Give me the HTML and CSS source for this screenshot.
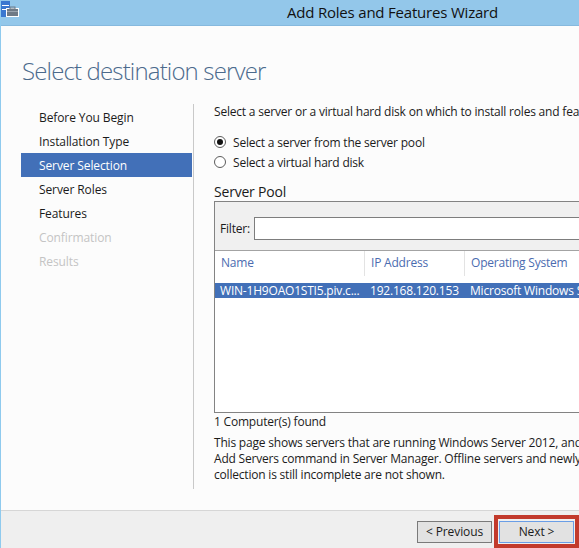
FILE: index.html
```html
<!DOCTYPE html>
<html lang="en">
<head>
<meta charset="utf-8">
<title>Add Roles and Features Wizard</title>
<link rel="stylesheet" href="styles.css">
</head>
<body>
<div class="window">
  <div class="titlebar">
    <span class="app-icon">
      <svg width="18" height="16" viewBox="0 0 18 16">
        <rect x="0" y="0" width="9" height="16" fill="#3a78d0"/>
        <rect x="1" y="4" width="7" height="1" fill="#ffffff"/>
        <rect x="1" y="8" width="7" height="1" fill="#ffffff"/>
        <rect x="5" y="7" width="13" height="9" fill="#ffffff"/>
        <rect x="9" y="6" width="5" height="2" fill="none" stroke="#6f7a86" stroke-width="1"/>
        <rect x="6" y="8" width="11" height="7" fill="#6f7a86"/>
        <rect x="6" y="10" width="11" height="1" fill="#9aa4ae"/>
      </svg>
    </span>
    <span class="title">Add Roles and Features Wizard</span>
    <span class="title-spacer"></span>
  </div>

  <div class="content">
    <div class="page-header">
      <h1 class="page-title">Select destination server</h1>
      <div class="dest">
        <div class="dest-label">DESTINATION SERVER</div>
        <div class="dest-value">WIN-1H9OAO1STI5.piv.com</div>
      </div>
    </div>

    <div class="main">
      <ul class="steps">
        <li class="step">Before You Begin</li>
        <li class="step">Installation Type</li>
        <li class="step active">Server Selection</li>
        <li class="step">Server Roles</li>
        <li class="step">Features</li>
        <li class="step disabled">Confirmation</li>
        <li class="step disabled">Results</li>
      </ul>

      <div class="pane">
        <p class="intro">Select a server or a virtual hard disk on which to install roles and features.</p>

        <div class="radios">
          <div class="radio-row"><span class="radio checked"></span><span>Select a server from the server pool</span></div>
          <div class="radio-row"><span class="radio"></span><span>Select a virtual hard disk</span></div>
        </div>

        <div class="pool-title">Server Pool</div>
        <div class="pool">
          <div class="pool-toolbar">
            <span class="filter-label">Filter:</span>
            <div class="filter-input"></div>
          </div>
          <div class="pool-head">
            <div class="col col-name">Name</div>
            <div class="col col-ip">IP Address</div>
            <div class="col col-os">Operating System</div>
          </div>
          <div class="pool-rows">
            <div class="pool-row selected">
              <div class="cell col-name">WIN-1H9OAO1STI5.piv.c...</div>
              <div class="cell col-ip">192.168.120.153</div>
              <div class="cell col-os">Microsoft Windows Server 2012 Datacenter</div>
            </div>
          </div>
        </div>
        <div class="count">1 Computer(s) found</div>
        <p class="note">This page shows servers that are running Windows Server 2012, and that have been added by using the<br>Add Servers command in Server Manager. Offline servers and newly-added servers from which data<br>collection is still incomplete are not shown.</p>
      </div>
    </div>
  </div>

  <div class="footer">
    <button class="btn">&lt; Previous</button>
    <span class="highlight"><button class="btn default">Next &gt;</button></span>
    <button class="btn">Install</button>
    <button class="btn">Cancel</button>
  </div>
</div>
</body>
</html>
```

FILE: styles.css
```css
* { box-sizing: border-box; }

html, body {
  margin: 0;
  padding: 0;
  width: 579px;
  height: 548px;
  overflow: hidden;
  background: #fcfcfc;
}

body {
  font-family: "Open Sans", "Noto Sans", sans-serif;
  font-size: 12px;
  letter-spacing: -0.2px;
  color: #1b1b1b;
}

.window {
  width: 784px;
  height: 548px;
  border-left: 1px solid #8fcaee;
  display: flex;
  flex-direction: column;
  background: #fcfcfc;
}

/* Title bar */
.titlebar {
  height: 26px;
  flex: none;
  background: #93c7ea;
  border-bottom: 1px solid #86b9de;
  display: grid;
  grid-template-columns: 1fr auto 1fr;
  align-items: center;
}
.app-icon {
  display: flex;
  align-self: start;
  padding-top: 1px;
}
.title {
  font-size: 15px;
  letter-spacing: -0.2px;
  color: #111;
  line-height: 24px;
  padding-bottom: 2px;
}

/* Content */
.content {
  flex: 1;
  display: flex;
  flex-direction: column;
}
.page-header {
  height: 78px;
  flex: none;
  display: grid;
  grid-template-columns: 557px 1fr;
  padding-left: 21px;
}
.page-title {
  margin: 0;
  padding-top: 28px;
  font-weight: 300;
  font-size: 24px;
  letter-spacing: -0.85px;
  line-height: 34px;
  color: #4b6a8c;
  white-space: nowrap;
}
.dest {
  padding-top: 36px;
  font-size: 9px;
  line-height: 12px;
  color: #1b1b1b;
  white-space: nowrap;
}
.dest-label { color: #4b6a8c; }

.main {
  height: 385px;
  flex: none;
  display: flex;
  padding-left: 20px;
}

/* Steps */
.steps {
  list-style: none;
  margin: 0;
  padding: 1px 1px 0 0;
  width: 173px;
  border-right: 1px solid #c9c9c9;
  flex: none;
}
.step {
  height: 24px;
  line-height: 26px;
  padding-left: 18px;
  color: #1b1b1b;
  letter-spacing: -0.1px;
  white-space: nowrap;
}
.step.active {
  background: #4270b8;
  color: #ffffff;
}
.step.disabled { color: #c4c4c4; }

/* Pane */
.pane {
  flex: 1;
  padding-left: 20px;
  padding-right: 20px;
  min-width: 0;
}
.intro {
  margin: 0;
  line-height: 16px;
  white-space: nowrap;
}
.radios {
  margin-top: 12px;
}
.radio-row {
  height: 20px;
  display: flex;
  align-items: center;
  gap: 7px;
  white-space: nowrap;
}
.radio {
  width: 12px;
  height: 12px;
  border-radius: 50%;
  border: 1px solid #5c5c5c;
  background: #fff;
  display: flex;
  align-items: center;
  justify-content: center;
  flex: none;
}
.radio.checked::after {
  content: "";
  width: 6px;
  height: 6px;
  border-radius: 50%;
  background: #111;
}

.pool-title {
  margin-top: 11px;
  font-size: 14px;
  line-height: 18px;
  color: #1b1b1b;
}
.pool {
  height: 212px;
  border: 1px solid #838383;
  background: #ffffff;
  display: flex;
  flex-direction: column;
}
.pool-toolbar {
  height: 49px;
  background: #f0f0f0;
  border-bottom: 1px solid #a3a3a3;
  display: flex;
  align-items: flex-start;
  padding: 15px 0 0 5px;
  gap: 4px;
}
.filter-label {
  line-height: 23px;
}
.filter-input {
  flex: 1;
  height: 23px;
  border: 1px solid #7d7d7d;
  background: #ffffff;
}
.pool-head {
  height: 25px;
  display: flex;
  align-items: stretch;
  color: #4b6cb0;
}
.col {
  line-height: 24px;
  padding-left: 6px;
  white-space: nowrap;
}
.col-name { width: 150px; flex: none; }
.col-ip { width: 100px; flex: none; }
.col-os { flex: 1; }
.pool-head .col-name,
.pool-head .col-ip { border-right: 1px solid #e3e3e3; }
.pool-rows {
  padding-top: 7px;
}
.pool-row {
  height: 15px;
  display: flex;
  line-height: 15px;
}
.pool-row.selected {
  background: #4270b8;
  color: #ffffff;
}
.cell {
  padding-left: 5px;
  white-space: nowrap;
  overflow: hidden;
}
.pool-row .col-name { width: 150px; }
.pool-row .col-ip { width: 100px; }

.count {
  margin-top: 1px;
  line-height: 16px;
}
.note {
  margin: 5px 0 0;
  line-height: 16px;
  white-space: nowrap;
}

/* Footer */
.footer {
  margin-top: auto;
  height: 38px;
  flex: none;
  border-top: 1px solid #d6d6d6;
  background: #efefef;
  display: flex;
  align-items: flex-start;
  padding: 10px 0 0 416px;
}
.btn {
  width: 75px;
  height: 22px;
  padding: 0;
  border: 1px solid #7a7a7a;
  background: #e2e2e2;
  font-family: "Open Sans", "Noto Sans", sans-serif;
  font-size: 12px;
  letter-spacing: -0.1px;
  color: #1b1b1b;
  line-height: 20px;
}
.btn.default {
  border-color: #6a9ee6;
  display: block;
}
.highlight {
  margin: -6px 8px 0 2px;
  border: 4px solid #c23a2c;
  padding: 2px 1px 1px 1px;
  display: block;
}
```
